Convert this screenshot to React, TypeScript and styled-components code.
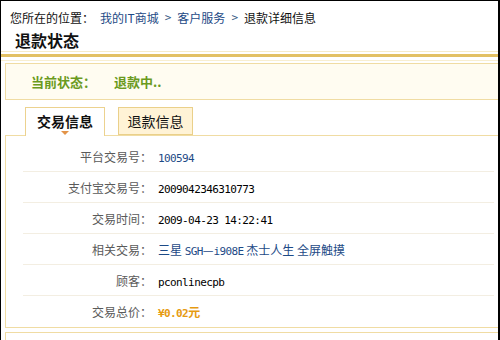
import React from "react";
import styled, { createGlobalStyle } from "styled-components";

const GlobalStyle = createGlobalStyle`
  html, body {
    margin: 0;
    padding: 0;
    background: #fff;
  }
  body {
    font-family: "Noto Sans CJK SC", "Liberation Sans", sans-serif;
    font-size: 12px;
    color: #000;
  }
`;

const gold = "#e2c063";
const paleGold = "#f0dca3";

type Row = {
  label: string;
  value: React.ReactNode;
  kind?: "link" | "price";
};

const Mono = styled.span`
  font-family: "DejaVu Sans Mono", "Liberation Mono", monospace;
  font-size: 11px;
  letter-spacing: -0.6px;
`;

const rows: Row[] = [
  { label: "平台交易号：", value: <Mono>100594</Mono>, kind: "link" },
  { label: "支付宝交易号：", value: <Mono>2009042346310773</Mono> },
  { label: "交易时间：", value: <Mono>2009-04-23 14:22:41</Mono> },
  {
    label: "相关交易：",
    value: (
      <>
        三星 <Mono>SGH</Mono>—<Mono>i908E</Mono> 杰士人生 全屏触摸
      </>
    ),
    kind: "link",
  },
  { label: "顾客：", value: <Mono>pconlinecpb</Mono> },
  {
    label: "交易总价：",
    value: (
      <>
        <Mono>¥0.02</Mono>元
      </>
    ),
    kind: "price",
  },
];

const App = () => {
  return (
    <>
      <GlobalStyle />
      <Page>
        <Crumbs>
          <Here>您所在的位置：</Here>
          <CrumbLink>我的IT商城</CrumbLink>
          <Sep>&gt;</Sep>
          <CrumbLink>客户服务</CrumbLink>
          <Sep>&gt;</Sep>
          <span>退款详细信息</span>
        </Crumbs>
        <Title>退款状态</Title>
        <Divider />

        <StatusBox>
          <StatusLabel>当前状态：</StatusLabel>
          <span>退款中..</span>
        </StatusBox>

        <TabBar>
          <Tab $active>交易信息</Tab>
          <Tab>退款信息</Tab>
        </TabBar>

        <Panel>
          {rows.map((r) => (
            <InfoRow key={r.label}>
              <Label>{r.label}</Label>
              <Value $kind={r.kind}>{r.value}</Value>
            </InfoRow>
          ))}
        </Panel>
        <NextBox />
      </Page>
    </>
  );
};

const Page = styled.div`
  width: 500px;
  height: 340px;
  box-sizing: border-box;
  border-top: 1px solid #000;
  border-left: 1px solid #000;
  border-right: 2px solid #000;
  overflow: hidden;
  background: #fff;
`;

const Crumbs = styled.div`
  display: flex;
  align-items: center;
  height: 20px;
  margin-top: 7px;
  padding-left: 9px;
  line-height: 20px;
  white-space: pre;
  color: #111;
`;

const Here = styled.span`
  margin-right: 6px;
`;

const CrumbLink = styled.span`
  color: #1d4a86;
`;

const Sep = styled.span`
  color: #3a5b85;
  margin: 0 6px;
  font-family: "DejaVu Sans Mono", monospace;
  font-size: 11px;
`;

const Title = styled.h1`
  margin: 2px 0 0;
  padding-left: 14px;
  height: 20px;
  line-height: 20px;
  font-size: 16px;
  font-weight: 700;
  color: #111;
`;

const Divider = styled.div`
  margin-top: 1px;
  height: 3px;
  padding: 2px 0 3px;
  border-top: 1px solid #f6ebc8;
  border-bottom: 1px solid #f8eed0;
  background: ${gold};
  background-clip: content-box;
`;

const StatusBox = styled.div`
  display: flex;
  align-items: center;
  margin: 2px 0 0 4px;
  height: 35px;
  padding-left: 25px;
  border: 1px solid ${paleGold};
  border-right: none;
  background: #fffcf1;
  color: #6a9a20;
  font-size: 13px;
  font-weight: 700;
`;

const StatusLabel = styled.span`
  margin-right: 18px;
`;

const TabBar = styled.div`
  display: flex;
  align-items: flex-start;
  gap: 13px;
  margin-top: 7px;
  padding-left: 24px;
  height: 28px;
`;

const Tab = styled.div<{ $active?: boolean }>`
  position: relative;
  box-sizing: border-box;
  display: flex;
  align-items: center;
  justify-content: center;
  width: ${(p) => (p.$active ? "80px" : "75px")};
  height: ${(p) => (p.$active ? "29px" : "28px")};
  border: 1px solid ${(p) => (p.$active ? "#ecd28f" : "#ead08a")};
  border-bottom: ${(p) => (p.$active ? "none" : "1px solid #ead08a")};
  background: ${(p) => (p.$active ? "#fff" : "#fff3d6")};
  font-size: 14px;
  font-weight: ${(p) => (p.$active ? 700 : 400)};
  color: #111;
  padding-bottom: ${(p) => (p.$active ? "2px" : "0")};
  z-index: 1;

  &::after {
    content: "";
    display: ${(p) => (p.$active ? "block" : "none")};
    position: absolute;
    left: 50%;
    bottom: 1px;
    margin-left: -4px;
    border-left: 4px solid transparent;
    border-right: 4px solid transparent;
    border-top: 4px solid #e39448;
  }
`;

const Panel = styled.div`
  margin-left: 4px;
  padding: 5px 4px 0 17px;
  height: 186px;
  border: 1px solid ${paleGold};
  border-right: none;
`;

const InfoRow = styled.div`
  display: flex;
  align-items: center;
  height: 30px;
  border-bottom: 1px solid #f3eee2;

  &:last-child {
    border-bottom: none;
  }
`;

const Label = styled.div`
  width: 129px;
  text-align: right;
  color: #5a5a5a;
  font-size: 12px;
`;

const Value = styled.div<{ $kind?: "link" | "price" }>`
  margin-left: 6px;
  font-size: 12px;
  white-space: pre;
  color: ${(p) =>
    p.$kind === "link" ? "#1d4a86" : p.$kind === "price" ? "#e69b12" : "#000"};
  font-weight: ${(p) => (p.$kind === "price" ? 700 : 400)};
`;

const NextBox = styled.div`
  margin: 4px 0 0 4px;
  height: 20px;
  border-top: 1px solid ${paleGold};
  border-left: 1px solid ${paleGold};
`;

export default App;
